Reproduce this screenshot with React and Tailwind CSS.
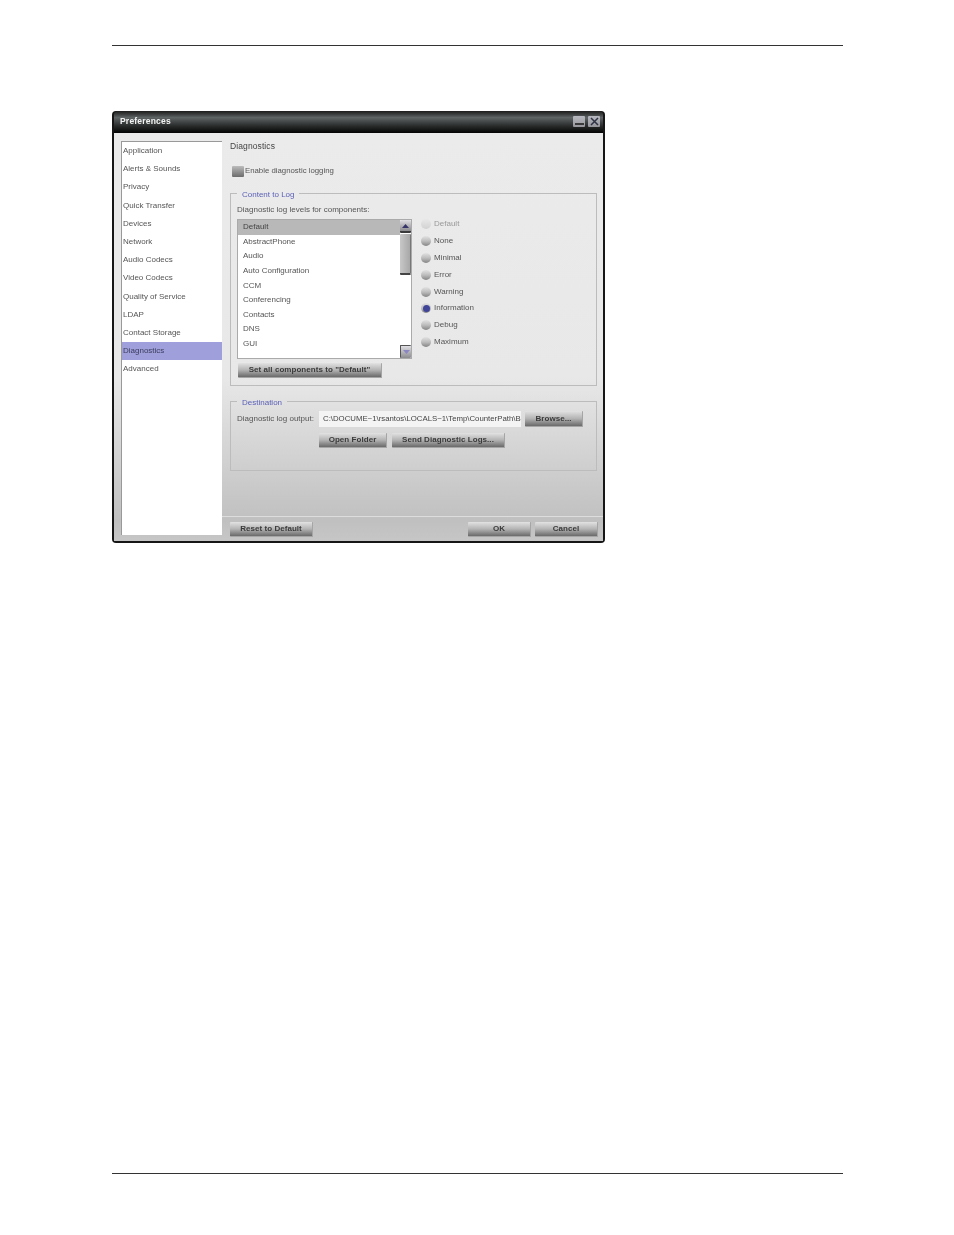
import React from 'react';

const navItems = [
  'Application', 'Alerts & Sounds', 'Privacy', 'Quick Transfer', 'Devices', 'Network', 'Audio Codecs',
  'Video Codecs', 'Quality of Service', 'LDAP', 'Contact Storage', 'Diagnostics', 'Advanced',
];
const components = ['Default', 'AbstractPhone', 'Audio', 'Auto Configuration', 'CCM', 'Conferencing', 'Contacts', 'DNS', 'GUI'];
const levels = ['Default', 'None', 'Minimal', 'Error', 'Warning', 'Information', 'Debug', 'Maximum'];

const SkinButton = ({ className = '', children }) => (
  <button className={`flex items-center justify-center rounded-[1px] border-b border-r border-[#a5a5a5] bg-gradient-to-b from-[#e2e2e2] via-[#b4b4b4] to-[#6a6a6a] text-[8px] font-bold tracking-[0.05px] text-[#3a3a3a] ${className}`}>
    {children}
  </button>
);

const Radio = ({ label, selected, disabled }) => (
  <div className="flex h-[16.9px] items-center">
    <span className={`flex h-[10px] w-[10px] items-end justify-center rounded-full bg-gradient-to-b pb-[1px] ${disabled ? 'from-[#e8e8e8] to-[#d2d2d2]' : 'from-[#e2e2e2] via-[#bdbdbd] to-[#858585]'}`}>
      {selected && <span className="h-[7px] w-[7px] rounded-full bg-[#3f4499]" />}
    </span>
    <span className={`ml-[3px] ${disabled ? 'text-[#999]' : 'text-[#555]'}`}>{label}</span>
  </div>
);

const ScrollArrow = ({ down }) => (
  <div className={`flex h-[13px] w-[11px] items-center justify-center rounded-[1px] bg-gradient-to-b from-[#e0e0e4] to-[#8c8c90] ${down ? 'border-l border-t border-[#555]' : 'border-b-2 border-[#3a3a3a]'}`}>
    <svg width="7" height="4" viewBox="0 0 7 4">
      <path d={down ? 'M0 0H7L3.5 4Z' : 'M0 4H7L3.5 0Z'} fill={down ? '#8a86c0' : '#35356b'} />
    </svg>
  </div>
);

const App = () => {
  return (
    <div className="h-[1235px] w-[954px] bg-white font-['Liberation_Sans',Arial,sans-serif]">
      <div className="h-[46px] pl-[112px]">
        <div className="h-[46px] w-[731px] border-b border-[#333]" />
      </div>

      <div className="ml-[112px] mt-[65px] flex h-[432px] w-[493px] flex-col rounded-[4px] bg-[#161616] px-[2px] pb-[2px] text-[8px] text-[#555] blur-[0.3px]">
        {/* title bar */}
        <div className="flex h-[22px] items-center justify-between rounded-t-[4px] bg-gradient-to-b from-[#1c1c1c] via-[#5f6464] via-30% to-[#050505] pb-[1px] pl-[6px] pr-[3px]">
          <span className="pb-[1px] text-[8.5px] font-bold tracking-[0.2px] text-[#f2f2f2]">Preferences</span>
          <div className="flex gap-[3px]">
            <div className="flex h-[11px] w-[12px] items-end justify-center rounded-[1px] bg-gradient-to-b from-[#b8b8c0] to-[#96969c] pb-[2px]">
              <div className="h-[2px] w-[9px] bg-[#3a3a3a]" />
            </div>
            <div className="flex h-[11px] w-[12px] items-center justify-center rounded-[1px] bg-gradient-to-b from-[#b8b8c0] to-[#96969c]">
              <svg width="9" height="9" viewBox="0 0 9 9">
                <path d="M1 1L8 8M8 1L1 8" stroke="#2f3444" strokeWidth="1.5" />
              </svg>
            </div>
          </div>
        </div>

        {/* body */}
        <div className="flex flex-1 bg-[linear-gradient(to_bottom,#ebebeb_0%,#e8e8e8_60%,#c0c0c0_95%,#c6c6c6_100%)]">
          <div className="pb-[6px] pl-[7px] pt-[8px]">
            <div className="h-full w-[101px] border-l border-t border-[#999] bg-white">
              {navItems.map((item) => (
                <div
                  key={item}
                  className={`flex h-[18.2px] items-center pl-[1px] ${item === 'Diagnostics' ? 'bg-[#9f9fdc] text-[#3c3c5c]' : ''}`}
                >
                  {item}
                </div>
              ))}
            </div>
          </div>

          <div className="flex flex-1 flex-col">
            <div className="flex-1 pl-[8px] pr-[6px]">
              <div className="flex h-[20px] items-end text-[8.5px] tracking-[0.1px] text-[#444]">Diagnostics</div>
              <div className="mt-[12px] flex h-[12px] items-center pl-[2px]">
                <span className="h-[11px] w-[12px] rounded-[1px] bg-gradient-to-b from-[#bcbcbc] to-[#6c6c6c]" />
                <span className="ml-[1px] text-[7.8px]">Enable diagnostic logging</span>
              </div>

              <fieldset className="mt-[11px] h-[198px] border border-[#bcbcbc] px-[6px]">
                <legend className="h-[10px] px-[5px] leading-[13px] text-[#5a5fb5]">Content to Log</legend>
                <div className="flex h-[21px] items-end pb-[3px]">Diagnostic log levels for components:</div>
                <div className="flex">
                  <div className="flex h-[140px] w-[175px] overflow-hidden border border-[#aaa] bg-white">
                    <div className="flex-1">
                      {components.map((c, i) => (
                        <div key={c} className={`flex h-[14.6px] items-center pl-[5px] ${i === 0 ? 'bg-[#b8b8b8] text-[#444]' : ''}`}>{c}</div>
                      ))}
                    </div>
                    <div className="flex w-[11px] flex-col justify-between">
                      <div>
                        <ScrollArrow />
                        <div className="mt-[1px] h-[41px] rounded-[1px] border-b-2 border-r border-b-[#444] border-r-[#777] bg-gradient-to-r from-[#c8c8c8] to-[#a8a8a8]" />
                      </div>
                      <ScrollArrow down />
                    </div>
                  </div>
                  <div className="-mt-[3.5px] ml-[9px]">
                    {levels.map((l) => (
                      <Radio key={l} label={l} selected={l === 'Information'} disabled={l === 'Default'} />
                    ))}
                  </div>
                </div>
                <SkinButton className="ml-[1px] mt-[4px] h-[15px] w-[144px]">Set all components to "Default"</SkinButton>
              </fieldset>

              <fieldset className="mt-[10px] h-[75px] border border-[#bcbcbc] px-[6px]">
                <legend className="h-[10px] px-[5px] leading-[13px] text-[#5a5fb5]">Destination</legend>
                <div className="mt-[5px] flex items-center">
                  <span className="w-[82px]">Diagnostic log output:</span>
                  <div className="flex h-[16px] w-[202px] items-center whitespace-nowrap bg-[#f4f4f4] pl-[4px] text-[7.8px] text-[#444]">C:\DOCUME~1\rsantos\LOCALS~1\Temp\CounterPath\B</div>
                  <SkinButton className="ml-[4px] h-[16px] w-[58px]">Browse...</SkinButton>
                </div>
                <div className="ml-[82px] mt-[6px] flex gap-[5px]">
                  <SkinButton className="h-[15px] w-[68px]">Open Folder</SkinButton>
                  <SkinButton className="h-[15px] w-[113px]">Send Diagnostic Logs...</SkinButton>
                </div>
              </fieldset>
            </div>

            <div className="flex h-[25px] items-center justify-between border-t border-[#ddd] pl-[8px] pr-[5px]">
              <SkinButton className="h-[15px] w-[83px]">Reset to Default</SkinButton>
              <div className="flex gap-[4px]">
                <SkinButton className="h-[15px] w-[63px]">OK</SkinButton>
                <SkinButton className="h-[15px] w-[63px]">Cancel</SkinButton>
              </div>
            </div>
          </div>
        </div>
      </div>

      <div className="ml-[112px] mt-[630px] w-[731px] border-t border-[#333]" />
    </div>
  );
};

export default App;
